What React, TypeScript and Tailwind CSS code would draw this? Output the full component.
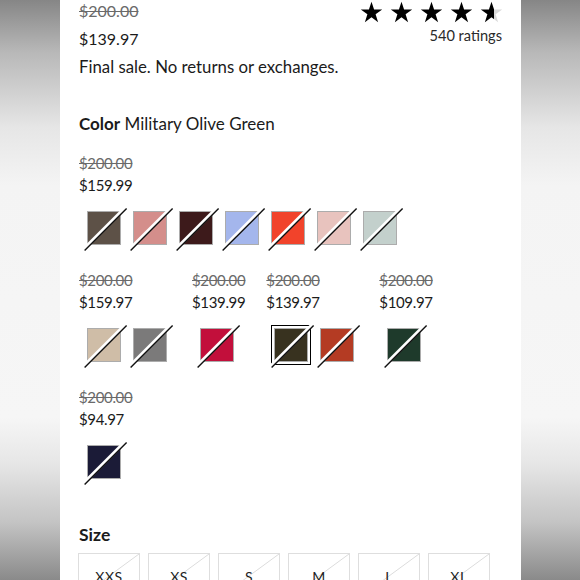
import React from "react";

type Sw = { c: string; sel?: boolean };
type Group = { was: string; now: string; sw: Sw[] };

const rows: Group[][] = [
  [
    {
      was: "$200.00",
      now: "$159.99",
      sw: [
        { c: "#5d5147" },
        { c: "#d48e8b" },
        { c: "#3d1a1b" },
        { c: "#a4b6ec" },
        { c: "#f1432b" },
        { c: "#e8c3be" },
        { c: "#c3d0cc" },
      ],
    },
  ],
  [
    { was: "$200.00", now: "$159.97", sw: [{ c: "#cfbda7" }, { c: "#7b7a7a" }] },
    { was: "$200.00", now: "$139.99", sw: [{ c: "#c20f3b" }] },
    { was: "$200.00", now: "$139.97", sw: [{ c: "#38321f", sel: true }, { c: "#b43b23" }] },
    { was: "$200.00", now: "$109.97", sw: [{ c: "#1e3a2b" }] },
  ],
  [{ was: "$200.00", now: "$94.97", sw: [{ c: "#1b1b37" }] }],
];

const font = { fontFamily: "Lato, 'Noto Sans', sans-serif" };

function Star({ fill = 1, id }: { fill?: number; id: string }) {
  return (
    <svg width="23" height="22" viewBox="0 0 24 23">
      <defs>
        <linearGradient id={id} x1="0" x2="1" y1="0" y2="0">
          <stop offset={`${fill * 100}%`} stopColor="#000" />
          <stop offset={`${fill * 100}%`} stopColor="#d9d9d9" />
        </linearGradient>
      </defs>
      <path
        d="M12 0.8l2.7 8.1h8.5l-6.9 5 2.6 8.2L12 17.1l-6.9 5 2.6-8.2-6.9-5h8.5z"
        fill={`url(#${id})`}
      />
    </svg>
  );
}

function Swatch({ s }: { s: Sw }) {
  return (
    <div className="w-[46px] pl-[8px]">
      <div
        className={
          "relative w-[34px] h-[34px] border-[1.5px] border-[#acacac] " +
          (s.sel ? "outline-[1.5px] outline-black outline-offset-[2.5px]" : "")
        }
        style={{ backgroundColor: s.c }}
      >
        <svg
          className="absolute left-[-5px] top-[-5px] overflow-visible"
          width="43"
          height="43"
          viewBox="0 0 43 43"
        >
          <line x1="0.5" y1="42.5" x2="42.5" y2="0.5" stroke="#fff" strokeWidth="3.6" />
          <line x1="1.6" y1="43.6" x2="43.6" y2="1.6" stroke="#111" strokeWidth="1.4" />
        </svg>
      </div>
    </div>
  );
}

const grad =
  "bg-[linear-gradient(to_bottom,#868686_0%,#b8b8b8_9%,#e6e6e6_22%,#f4f4f4_32%,#f6f6f6_72%,#e6e6e6_80%,#c4c4c4_90%,#8a8a8a_100%)]";

export default function App() {
  return (
    <div className="w-[580px] h-[580px] overflow-hidden flex bg-white text-[#1b1b1b]" style={font}>
      <div className="w-[60px] shrink-0 bg-[linear-gradient(to_bottom,#868686_0%,#b8b8b8_9%,#e6e6e6_22%,#f4f4f4_32%,#f6f6f6_72%,#e6e6e6_80%,#c4c4c4_90%,#8a8a8a_100%)]" />
      <div className="w-[461px] shrink-0 px-[19px] bg-white">
        <div className="flex justify-between mt-[-3px]">
          <div className="text-[16px] leading-[28px]">
            <div className="line-through text-[#6a6a6a]">$200.00</div>
            <div>$139.97</div>
          </div>
          <div className="flex flex-col items-end pt-[4px]">
            <div className="flex gap-[7px] mr-[-1px]">
              <Star id="s1" />
              <Star id="s2" />
              <Star id="s3" />
              <Star id="s4" />
              <Star id="s5" fill={0.62} />
            </div>
            <div className="text-[14.6px] leading-[22px] mt-[2px] text-[#2a2a2a]">540 ratings</div>
          </div>
        </div>
        <div className="text-[16.8px] leading-[28px]">Final sale. No returns or exchanges.</div>

        <div className="mt-[32px] text-[17px] leading-[22px]">
          <span className="font-bold">Color</span> Military Olive Green
        </div>

        <div className="mt-[17px] flex flex-col gap-[24px]">
          {rows.map((row, ri) => (
            <div key={ri} className="flex gap-x-[21px]">
              {row.map((g, gi) => (
                <div key={gi} className="flex flex-col">
                  <div className="text-[15px] tracking-[-0.35px] leading-[22px] line-through text-[#6a6a6a]">{g.was}</div>
                  <div className="text-[15px] tracking-[-0.35px] leading-[22px]">{g.now}</div>
                  <div className="flex mt-[15px]">
                    {g.sw.map((s, si) => (
                      <Swatch key={si} s={s} />
                    ))}
                  </div>
                </div>
              ))}
            </div>
          ))}
        </div>

        <div className="mt-[45px] text-[17.5px] leading-[22px] font-bold">Size</div>
        <div className="mt-[7px] ml-[-1px] flex gap-[8px]">
          {["XXS", "XS", "S", "M", "L", "XL"].map((s) => (
            <div
              key={s}
              className="relative w-[62px] h-[46px] border border-[#dedede] flex items-center justify-center text-[14px] tracking-[0.5px] text-[#222]"
            >
              <svg className="absolute inset-0" width="60" height="44" viewBox="0 0 60 44" preserveAspectRatio="none">
                <line x1="0" y1="44" x2="60" y2="0" stroke="#dcdcdc" strokeWidth="1" />
              </svg>
              <span className="relative">{s}</span>
            </div>
          ))}
        </div>
      </div>
      <div className={"flex-1 " + grad} />
    </div>
  );
}
